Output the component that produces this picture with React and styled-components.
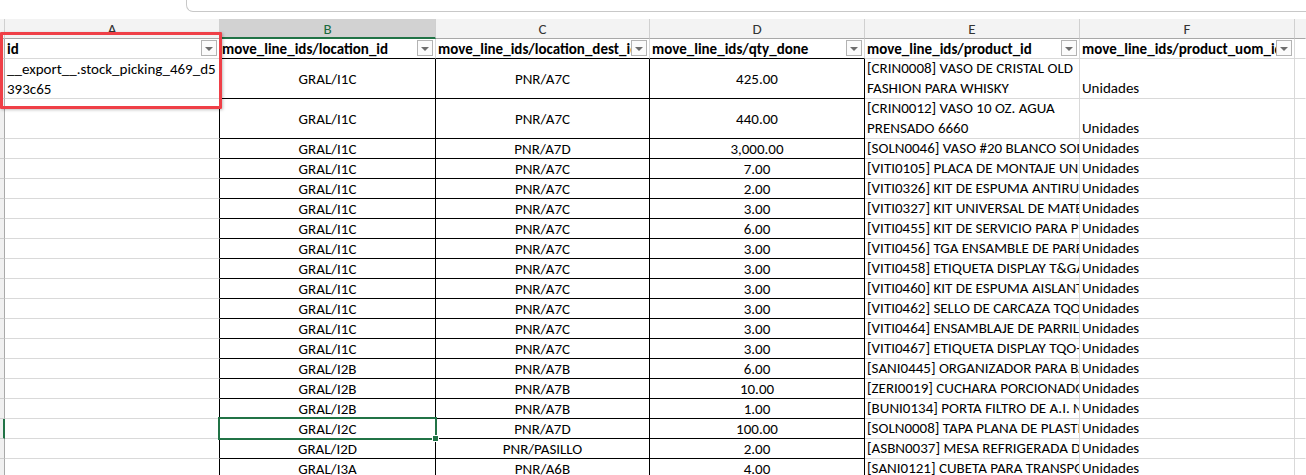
import React from 'react'
import styled, { createGlobalStyle } from 'styled-components'

const GlobalStyle = createGlobalStyle`
  body {
    margin: 0;
    background: #ffffff;
    font-family: Carlito, Calibri, Lato, "Liberation Sans", sans-serif;
  }
`

const Page = styled.div`
  width: 1306px;
  height: 475px;
  overflow: hidden;
  position: relative;
  background: #ffffff;
  font-size: 15px;
  color: #000;
`

const TopBar = styled.div`
  height: 19px;
  display: flex;
  align-items: flex-start;
`

const FormulaBox = styled.div`
  margin-left: 186px;
  flex: 1;
  height: 11px;
  border-left: 1px solid #c8c8c8;
  border-bottom: 1px solid #c8c8c8;
  border-bottom-left-radius: 7px;
  background: #fff;
`

const Grid = styled.div`
  display: grid;
  grid-template-columns: 5px 215px 216px 214px 215px 215px 215px 1fr;
  grid-template-rows: 20px 20px 40px 40px;
  grid-auto-rows: 20px;
`

const ColHead = styled.div`
  box-sizing: border-box;
  background: ${p => (p.$active ? '#d2d2d2' : '#f3f3f3')};
  color: ${p => (p.$active ? '#1b6a3e' : '#333')};
  border-right: 1px solid ${p => (p.$last ? 'transparent' : '#d0d0d0')};
  border-bottom: ${p => (p.$active ? '2px solid #217346' : '1px solid #a8a8a8')};
  display: flex;
  align-items: center;
  justify-content: center;
  font-size: 15px;
  padding-top: ${p => (p.$active ? '1px' : '0')};
`

const RowHead = styled.div`
  box-sizing: border-box;
  background: #f0f0f0;
  border-right: ${p => (p.$active ? '2px solid #217346' : '1px solid #a9a9a9')};
  border-bottom: 1px solid #cfcfcf;
`

const Cell = styled.div`
  box-sizing: border-box;
  position: relative;
  border-right: 1px solid ${p => p.$rb || '#d9d9d9'};
  border-bottom: 1px solid ${p => p.$bb || '#d9d9d9'};
  display: flex;
  align-items: ${p => (p.$v === 'top' ? 'flex-start' : p.$v === 'center' ? 'center' : 'flex-end')};
  justify-content: ${p => (p.$h === 'center' ? 'center' : 'flex-start')};
  padding: 0 2px 0 2px;
  overflow: ${p => (p.$selected ? 'visible' : 'hidden')};
  white-space: ${p => (p.$wrap ? 'pre-line' : 'pre')};
  line-height: 20px;
  font-weight: ${p => (p.$bold ? 700 : 400)};
`

const HeadText = styled.span`
  flex: 1;
  min-width: 0;
  overflow: hidden;
  white-space: nowrap;
  padding-right: 2px;
`

const FilterButton = styled.div`
  box-sizing: border-box;
  flex: none;
  width: 16px;
  height: 16px;
  margin: 0 0 1px -17px;
  border: 1px solid #b3b3b3;
  background: #fbfbfb;
  display: flex;
  align-items: center;
  justify-content: center;
  position: relative;
  z-index: 1;

  &::after {
    content: '';
    width: 0;
    height: 0;
    border-left: 4px solid transparent;
    border-right: 4px solid transparent;
    border-top: 4px solid #6d6d6d;
    margin-top: 1px;
  }
`

const Selection = styled.div`
  position: absolute;
  left: -2px;
  top: -2px;
  right: -2px;
  bottom: -2px;
  border: 2px solid #217346;
  z-index: 3;

  &::after {
    content: '';
    position: absolute;
    right: -4px;
    bottom: -4px;
    width: 5px;
    height: 5px;
    background: #217346;
    border: 1px solid #fff;
  }
`

const Callout = styled.div`
  position: absolute;
  left: 0;
  top: 32px;
  width: 222px;
  height: 77px;
  box-sizing: border-box;
  border: 3px solid #ef3f47;
  border-radius: 1px;
  box-shadow: 1px 1px 3px rgba(0, 0, 0, 0.25);
  z-index: 5;
  pointer-events: none;
`

const headers = [
  'id',
  'move_line_ids/location_id',
  'move_line_ids/location_dest_id',
  'move_line_ids/qty_done',
  'move_line_ids/product_id',
  'move_line_ids/product_uom_id',
]

const rows = [
  ['__export__.stock_picking_469_d5\n393c65', 'GRAL/I1C', 'PNR/A7C', '425.00', '[CRIN0008] VASO DE CRISTAL OLD\nFASHION PARA WHISKY', 'Unidades'],
  ['', 'GRAL/I1C', 'PNR/A7C', '440.00', '[CRIN0012] VASO 10 OZ. AGUA\nPRENSADO 6660', 'Unidades'],
  ['', 'GRAL/I1C', 'PNR/A7D', '3,000.00', '[SOLN0046] VASO #20 BLANCO SOLO', 'Unidades'],
  ['', 'GRAL/I1C', 'PNR/A7C', '7.00', '[VITI0105] PLACA DE MONTAJE UNIVERSAL', 'Unidades'],
  ['', 'GRAL/I1C', 'PNR/A7C', '2.00', '[VITI0326] KIT DE ESPUMA ANTIRUIDO', 'Unidades'],
  ['', 'GRAL/I1C', 'PNR/A7C', '3.00', '[VITI0327] KIT UNIVERSAL DE MATERIAL', 'Unidades'],
  ['', 'GRAL/I1C', 'PNR/A7C', '6.00', '[VITI0455] KIT DE SERVICIO PARA PUERTA', 'Unidades'],
  ['', 'GRAL/I1C', 'PNR/A7C', '3.00', '[VITI0456] TGA ENSAMBLE DE PARRILLA', 'Unidades'],
  ['', 'GRAL/I1C', 'PNR/A7C', '3.00', '[VITI0458] ETIQUETA DISPLAY T&GA', 'Unidades'],
  ['', 'GRAL/I1C', 'PNR/A7C', '3.00', '[VITI0460] KIT DE ESPUMA AISLANTE', 'Unidades'],
  ['', 'GRAL/I1C', 'PNR/A7C', '3.00', '[VITI0462] SELLO DE CARCAZA TQO', 'Unidades'],
  ['', 'GRAL/I1C', 'PNR/A7C', '3.00', '[VITI0464] ENSAMBLAJE DE PARRILLA', 'Unidades'],
  ['', 'GRAL/I1C', 'PNR/A7C', '3.00', '[VITI0467] ETIQUETA DISPLAY TQO-', 'Unidades'],
  ['', 'GRAL/I2B', 'PNR/A7B', '6.00', '[SANI0445] ORGANIZADOR PARA BARRA', 'Unidades'],
  ['', 'GRAL/I2B', 'PNR/A7B', '10.00', '[ZERI0019] CUCHARA PORCIONADORA', 'Unidades'],
  ['', 'GRAL/I2B', 'PNR/A7B', '1.00', '[BUNI0134] PORTA FILTRO DE A.I. NEGRO', 'Unidades'],
  ['', 'GRAL/I2C', 'PNR/A7D', '100.00', '[SOLN0008] TAPA PLANA DE PLASTICO', 'Unidades'],
  ['', 'GRAL/I2D', 'PNR/PASILLO', '2.00', '[ASBN0037] MESA REFRIGERADA DE', 'Unidades'],
  ['', 'GRAL/I3A', 'PNR/A6B', '4.00', '[SANI0121] CUBETA PARA TRANSPORTE', 'Unidades'],
]

const BLACK = '#000'
const SELECTED_ROW = 16

const App = () => {
  return (
    <Page>
      <GlobalStyle />
      <TopBar>
        <FormulaBox />
      </TopBar>
      <Grid>
        <ColHead />
        {['A', 'B', 'C', 'D', 'E', 'F', ''].map((letter, i) => (
          <ColHead key={i} $active={letter === 'B'} $last={i === 6}>
            {letter}
          </ColHead>
        ))}

        <RowHead />
        {headers.map((h, i) => (
          <Cell key={h} $bold $v="center" $bb={i >= 1 && i <= 3 ? BLACK : undefined}>
            <HeadText>{h}</HeadText>
            <FilterButton />
          </Cell>
        ))}
        <Cell $rb="transparent" />

        {rows.map((r, ri) => {
          const tall = ri < 2
          const selected = ri === SELECTED_ROW
          return (
            <React.Fragment key={ri}>
              <RowHead $active={selected} />
              <Cell $rb={BLACK} $wrap $v="top">{r[0]}</Cell>
              <Cell $rb={BLACK} $bb={BLACK} $h="center" $v="center" $selected={selected}>
                {r[1]}
                {selected && <Selection />}
              </Cell>
              <Cell $rb={BLACK} $bb={BLACK} $h="center" $v="center">{r[2]}</Cell>
              <Cell $rb={BLACK} $bb={BLACK} $h="center" $v="center">{r[3]}</Cell>
              <Cell $wrap={tall} $v="bottom">{r[4]}</Cell>
              <Cell $v="bottom">{r[5]}</Cell>
              <Cell $rb="transparent" />
            </React.Fragment>
          )
        })}
      </Grid>
      <Callout />
    </Page>
  )
}

export default App
